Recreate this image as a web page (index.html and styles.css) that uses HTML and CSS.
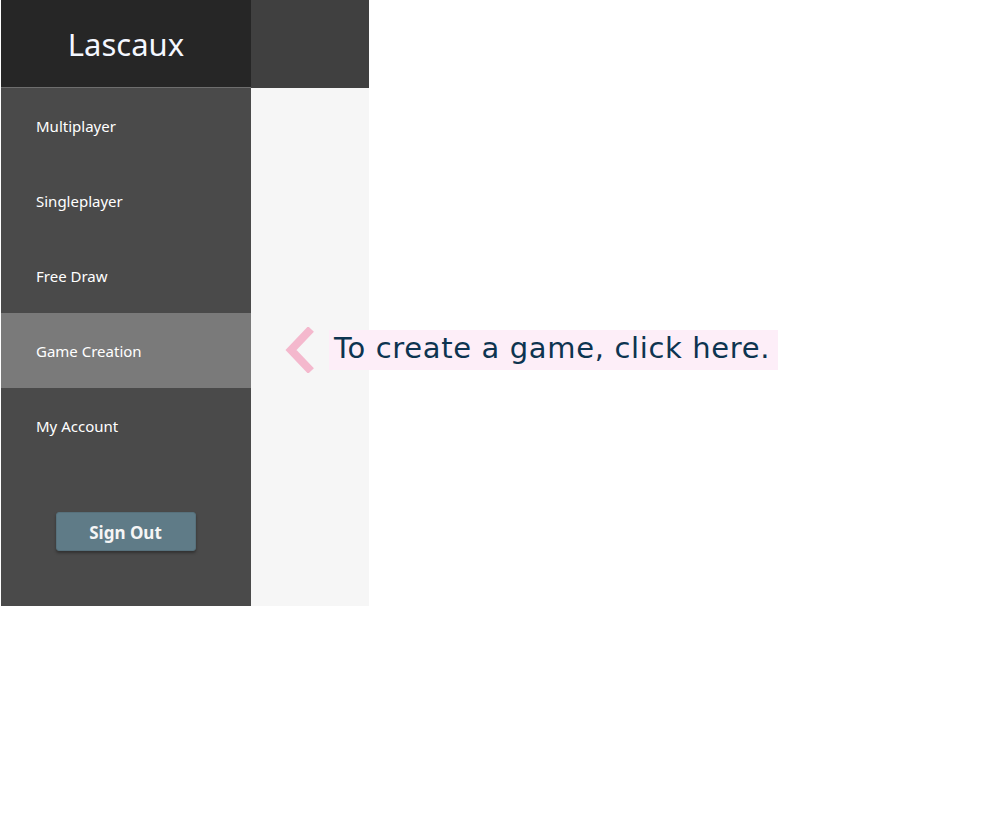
FILE: index.html
```html
<!DOCTYPE html>
<html>
<head>
<meta charset="utf-8">
<link rel="stylesheet" href="styles.css">
</head>
<body>
<div class="app">
  <aside class="sidebar">
    <header class="brand">Lascaux</header>
    <nav class="menu">
      <div class="item">Multiplayer</div>
      <div class="item">Singleplayer</div>
      <div class="item">Free Draw</div>
      <div class="item active">Game Creation</div>
      <div class="item">My Account</div>
    </nav>
    <div class="signout-wrap"><button class="signout">Sign Out</button></div>
  </aside>
  <section class="panel">
    <div class="panel-top"></div>
    <div class="panel-body"></div>
  </section>
  <div class="tip">
    <svg class="tip-arrow" width="32" height="46" viewBox="0 0 32 46"><path d="M27 2 L7 23 L27 44" fill="none" stroke="#f4b8cd" stroke-width="8"/></svg>
    <span class="tip-text">To create a game, click here.</span>
  </div>
</div>
</body>
</html>
```
FILE: styles.css
```css
html, body { margin: 0; padding: 0; background: #fff; }
body { font-family: "Noto Sans", "Open Sans", sans-serif; }
.app { position: relative; display: flex; margin-left: 1px; height: 606px; }
.sidebar { width: 250px; background: #4a4a4a; display: flex; flex-direction: column; }
.brand { height: 87px; background: #262626; border-bottom: 1px solid #6e6e6e; color: #f4f7ff; font-size: 31px; display: flex; align-items: center; justify-content: center; box-sizing: content-box; }
.menu { display: flex; flex-direction: column; }
.item { height: 75px; display: flex; align-items: center; padding-left: 35px; color: #fff; font-size: 15px; }
.item.active { background: #7a7a7a; }
.signout-wrap { display: flex; justify-content: center; padding-top: 49px; padding-right: 1px; }
.signout { width: 140px; height: 39px; padding-top: 3px; background: #5f7b87; border: 1px solid #57717c; border-radius: 3px; color: #f5f5f5; font-family: "Noto Sans", sans-serif; font-weight: bold; font-size: 17px; box-shadow: 0 2px 3px rgba(0,0,0,0.35); }
.panel { width: 118px; display: flex; flex-direction: column; }
.panel-top { height: 88px; background: #404040; }
.panel-body { flex: 1; background: #f6f6f6; }
.tip { position: absolute; left: 283px; top: 327px; display: flex; align-items: center; gap: 13px; }
.tip-arrow { display: block; }
.tip-text { background: #fdeef8; color: #0d3450; font-family: "DejaVu Sans", Verdana, sans-serif; font-size: 29px; letter-spacing: 0.65px; height: 40px; line-height: 36px; padding: 0 8px 4px 5px; box-sizing: border-box; white-space: nowrap; }
```
